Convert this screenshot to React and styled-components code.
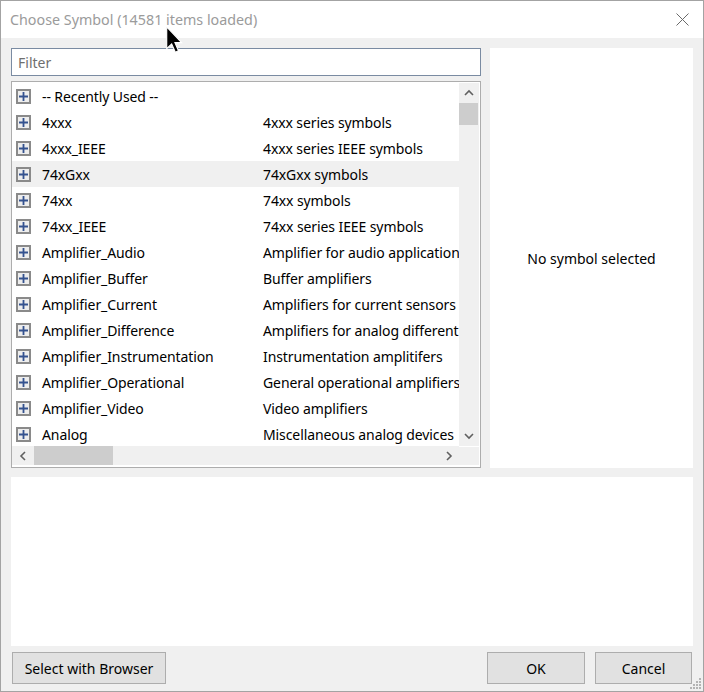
import React from "react";
import styled, { createGlobalStyle } from "styled-components";

const GlobalStyle = createGlobalStyle`
  html, body {
    margin: 0;
    padding: 0;
    background: #ffffff;
  }
  * {
    box-sizing: border-box;
  }
`;

const symbolLibs = [
  ["-- Recently Used --", ""],
  ["4xxx", "4xxx series symbols"],
  ["4xxx_IEEE", "4xxx series IEEE symbols"],
  ["74xGxx", "74xGxx symbols"],
  ["74xx", "74xx symbols"],
  ["74xx_IEEE", "74xx series IEEE symbols"],
  ["Amplifier_Audio", "Amplifier for audio applications"],
  ["Amplifier_Buffer", "Buffer amplifiers"],
  ["Amplifier_Current", "Amplifiers for current sensors"],
  ["Amplifier_Difference", "Amplifiers for analog differential signals"],
  ["Amplifier_Instrumentation", "Instrumentation amplitifers"],
  ["Amplifier_Operational", "General operational amplifiers"],
  ["Amplifier_Video", "Video amplifiers"],
  ["Analog", "Miscellaneous analog devices"],
];

const Window = styled.div`
  position: relative;
  width: 704px;
  height: 692px;
  display: flex;
  flex-direction: column;
  border: 1px solid #a3a3a3;
  font-family: "Segoe UI", "Noto Sans", sans-serif;
  font-size: 14px;
  color: #000;
  overflow: hidden;
`;

const TitleBar = styled.div`
  height: 37px;
  flex: none;
  display: flex;
  align-items: center;
  justify-content: space-between;
  padding: 0 14px 0 9px;
  background: #ffffff;
`;

const Title = styled.div`
  font-size: 14.3px;
  color: #9b9b9b;
  padding-bottom: 1px;
`;

const Body = styled.div`
  flex: 1;
  display: flex;
  flex-direction: column;
  background: #f0f0f0;
  padding: 10px 10px 7px 10px;
`;

const TopSection = styled.div`
  height: 420px;
  flex: none;
  display: grid;
  grid-template-columns: 470px 203px;
  column-gap: 9px;
`;

const LeftColumn = styled.div`
  display: flex;
  flex-direction: column;
  gap: 5px;
`;

const FilterInput = styled.div`
  height: 28px;
  flex: none;
  border: 1px solid #7a8ba2;
  background: #fff;
  display: flex;
  align-items: center;
  padding-left: 6px;
  color: #6f6f6f;
`;

const Tree = styled.div`
  flex: 1;
  border: 1px solid #adadad;
  background: #fff;
  display: grid;
  grid-template-columns: 447px 20px;
  grid-template-rows: 363px 20px;
  padding-top: 1px;
  min-height: 0;
`;

const RowViewport = styled.div`
  overflow: hidden;
`;

const Row = styled.div`
  height: 26px;
  display: flex;
  align-items: center;
  padding-left: 4px;
  white-space: nowrap;
  letter-spacing: -0.1px;
  background: ${(p) => (p.$hover ? "#f0f0f0" : "transparent")};
`;

const Expander = styled.svg`
  flex: none;
  width: 15px;
  height: 15px;
  margin-right: 11px;
`;

const NameCell = styled.span`
  flex: none;
  width: 221px;
`;

const DescCell = styled.span`
  flex: none;
`;

const VScroll = styled.div`
  background: #f0f0f0;
  display: flex;
  flex-direction: column;
`;

const HScroll = styled.div`
  background: #f0f0f0;
  display: flex;
  align-items: stretch;
  margin-bottom: 1px;
  height: 19px;
`;

const ArrowButton = styled.div`
  flex: none;
  width: ${(p) => p.$w || "20px"};
  height: ${(p) => p.$h || "20px"};
  display: flex;
  align-items: center;
  justify-content: center;
`;

const VThumb = styled.div`
  height: 22px;
  width: 19px;
  background: #cdcdcd;
`;

const HThumb = styled.div`
  width: 79px;
  background: #cdcdcd;
  margin-left: 1px;
`;

const Spacer = styled.div`
  flex: 1;
`;

const Corner = styled.div`
  background: #f0f0f0;
  margin: 1px 0 1px 0;
`;

const Preview = styled.div`
  background: #fff;
  display: flex;
  align-items: center;
  justify-content: center;
`;

const InfoPanel = styled.div`
  margin-top: 9px;
  height: 169px;
  flex: none;
  background: #fff;
`;

const ButtonRow = styled.div`
  margin-top: 6px;
  display: flex;
  gap: 10px;
  padding: 0 1px 0 1px;
`;

const Button = styled.div`
  width: ${(p) => p.$w};
  height: 32px;
  display: flex;
  align-items: center;
  justify-content: center;
  background: #e1e1e1;
  border: 1px solid #adadad;
  margin-left: ${(p) => (p.$push ? "auto" : "0")};
`;

const Grip = styled.svg`
  position: absolute;
  right: 1px;
  bottom: 1px;
`;

const Cursor = styled.svg`
  position: absolute;
  left: 165px;
  top: 25px;
  pointer-events: none;
`;

const Chevron = ({ dir }) => {
  const paths = {
    up: "M1 6 L5 2 L9 6",
    down: "M1 2 L5 6 L9 2",
    left: "M6 1 L2 5 L6 9",
    right: "M2 1 L6 5 L2 9",
  };
  const vertical = dir === "up" || dir === "down";
  return (
    <svg width={vertical ? 10 : 8} height={vertical ? 8 : 10} viewBox={vertical ? "0 0 10 8" : "0 0 8 10"}>
      <path d={paths[dir]} fill="none" stroke="#606060" strokeWidth="1.6" />
    </svg>
  );
};

const PlusBox = () => (
  <Expander viewBox="0 0 15 15">
    <rect x="1" y="1" width="13" height="13" fill="#ededed" stroke="#8a8a8a" strokeWidth="2" />
    <path d="M7.5 3 V12 M3 7.5 H12" stroke="#34528f" strokeWidth="1.8" />
  </Expander>
);

export default function App() {
  return (
    <>
      <GlobalStyle />
      <Window>
        <TitleBar>
          <Title>Choose Symbol (14581 items loaded)</Title>
          <svg width="13" height="13" viewBox="0 0 13 13">
            <path d="M0.5 0.5 L12.5 12.5 M12.5 0.5 L0.5 12.5" stroke="#6a6a6a" strokeWidth="1" />
          </svg>
        </TitleBar>
        <Body>
          <TopSection>
            <LeftColumn>
              <FilterInput>Filter</FilterInput>
              <Tree>
                <RowViewport>
                  {symbolLibs.map(([name, desc], i) => (
                    <Row key={name} $hover={i === 3}>
                      <PlusBox />
                      <NameCell>{name}</NameCell>
                      <DescCell>{desc}</DescCell>
                    </Row>
                  ))}
                </RowViewport>
                <VScroll>
                  <ArrowButton $w="19px" $h="20px">
                    <Chevron dir="up" />
                  </ArrowButton>
                  <VThumb />
                  <Spacer />
                  <ArrowButton $w="19px" $h="20px">
                    <Chevron dir="down" />
                  </ArrowButton>
                </VScroll>
                <HScroll>
                  <ArrowButton $w="21px" $h="19px">
                    <Chevron dir="left" />
                  </ArrowButton>
                  <HThumb />
                  <Spacer />
                  <ArrowButton $w="21px" $h="19px">
                    <Chevron dir="right" />
                  </ArrowButton>
                </HScroll>
                <Corner />
              </Tree>
            </LeftColumn>
            <Preview>No symbol selected</Preview>
          </TopSection>
          <InfoPanel />
          <ButtonRow>
            <Button $w="154px">Select with Browser</Button>
            <Button $w="98px" $push>
              OK
            </Button>
            <Button $w="97px">Cancel</Button>
          </ButtonRow>
        </Body>
        <Grip width="12" height="12" viewBox="0 0 12 12">
          {[
            [9, 0],
            [9, 3],
            [6, 3],
            [9, 6],
            [6, 6],
            [3, 6],
            [9, 9],
            [6, 9],
            [3, 9],
            [0, 9],
          ].map(([x, y]) => (
            <rect key={`${x}-${y}`} x={x} y={y} width="2" height="2" fill="#b4b4b4" />
          ))}
        </Grip>
        <Cursor width="17" height="27" viewBox="0 0 12 19">
          <path
            d="M0.5 0.5 L0.5 16 L4 12.6 L6.6 18.5 L8.8 17.5 L6.3 11.7 L11 11.7 Z"
            fill="#000"
            stroke="#fff"
            strokeWidth="0.8"
          />
        </Cursor>
      </Window>
    </>
  );
}
